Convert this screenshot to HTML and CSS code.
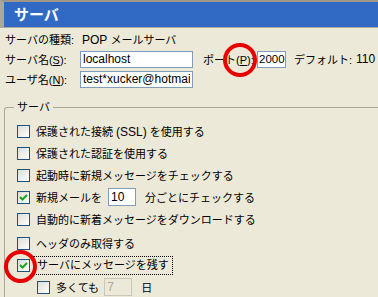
FILE: index.html
```html
<!DOCTYPE html>
<html>
<head lang="ja">
    <meta charset="UTF-8">
    <title>サーバ</title>
    <link rel="stylesheet" href="styles.css">
</head>
<body>
<div class="header">
    <h1 class="header-title">サーバ</h1>
</div>
<div class="info">
    <div class="info-row">
        <span class="info-label">サーバの種類:</span>
        <span class="info-value"><span class="latin">POP</span> メールサーバ</span>
    </div>
    <div class="info-row">
        <label class="info-label">サーバ名(<u>S</u>):</label>
        <input class="field field-host" type="text" value="localhost">
        <label class="port-label">ポート(<u>P</u>):</label>
        <input class="field field-port" type="text" value="2000">
        <span class="default-label">デフォルト:</span>
        <span class="latin">110</span>
    </div>
    <div class="info-row">
        <label class="info-label">ユーザ名(<u>N</u>):</label>
        <input class="field field-host" type="text" value="test*xucker@hotmail.com">
    </div>
</div>
<fieldset class="group">
    <legend class="group-title">サーバ</legend>
    <div class="opt">
        <span class="check"></span>
        <span class="opt-text">保護された接続 <span class="latin">(SSL)</span> を使用する</span>
    </div>
    <div class="opt">
        <span class="check"></span>
        <span class="opt-text">保護された認証を使用する</span>
    </div>
    <div class="opt">
        <span class="check"></span>
        <span class="opt-text">起動時に新規メッセージをチェックする</span>
    </div>
    <div class="opt">
        <span class="check checked">
            <svg width="11" height="11" viewBox="0 0 11 11"><path d="M2 5 L4.5 7.5 L9 3" fill="none" stroke="#21a121" stroke-width="2"/></svg>
        </span>
        <span class="opt-text">新規メールを</span>
        <input class="field field-small" type="text" value="10">
        <span class="opt-text opt-after">分ごとにチェックする</span>
    </div>
    <div class="opt">
        <span class="check"></span>
        <span class="opt-text">自動的に新着メッセージをダウンロードする</span>
    </div>
    <div class="opt opt-gap">
        <span class="check"></span>
        <span class="opt-text">ヘッダのみ取得する</span>
    </div>
    <div class="opt">
        <span class="check checked">
            <svg width="11" height="11" viewBox="0 0 11 11"><path d="M2 5 L4.5 7.5 L9 3" fill="none" stroke="#21a121" stroke-width="2"/></svg>
        </span>
        <span class="opt-text focus">サーバにメッセージを残す</span>
    </div>
    <div class="opt opt-sub">
        <span class="check"></span>
        <span class="opt-text">多くても</span>
        <input class="field field-small field-off" type="text" value="7" disabled>
        <span class="opt-text opt-day">日</span>
    </div>
</fieldset>
<span class="mark mark-port"></span>
<span class="mark mark-keep"></span>
</body>
</html>
```

FILE: styles.css
```css
* {
    margin: 0;
    padding: 0;
    box-sizing: border-box;
}

body {
    width: 378px;
    height: 297px;
    overflow: hidden;
    position: relative;
    background: #ece9d8;
    color: #000;
    font-family: "Liberation Sans", "Noto Sans CJK JP", sans-serif;
    font-size: 11px;
}

.latin {
    font-size: 12px;
}

.header {
    height: 28px;
    border-top: 2px solid #9d9689;
    border-left: 4px solid #aca899;
    border-bottom: 1px solid #aca899;
    background: #316ac5;
}

.header-title {
    padding-left: 10px;
    color: #fff;
    font-size: 15px;
    font-weight: bold;
    line-height: 25px;
}

.info {
    padding: 1px 0 0 5px;
}

.info-row {
    display: flex;
    align-items: center;
    height: 20px;
    white-space: nowrap;
}

.info-label {
    width: 75px;
    flex-shrink: 0;
}

.info-value {
    padding-left: 2px;
}

.field {
    height: 17px;
    border: 1px solid #7f9db9;
    background: #fff;
    font-family: "Liberation Sans", sans-serif;
    font-size: 12px;
    padding: 0 2px;
    color: #000;
}

.field-host {
    width: 113px;
}

.port-label {
    width: 54px;
    margin-left: 10px;
    flex-shrink: 0;
}

.field-port {
    width: 29px;
    padding: 0 0 0 1px;
    font-size: 11.5px;
}

.default-label {
    width: 62px;
    margin-left: 8px;
    flex-shrink: 0;
}

.group {
    margin: 10px 0 0 4px;
    height: 200px;
    border: 1px solid #aca899;
    border-right: none;
    border-bottom: none;
    border-radius: 3px 0 0 0;
    padding: 5px 0 0 12px;
}

.group-title {
    margin-left: -3px;
    padding: 0 3px;
    line-height: 16px;
}

.opt {
    display: flex;
    align-items: center;
    height: 22px;
    white-space: nowrap;
}

.opt-gap {
    margin-top: 2px;
}

.opt-sub {
    padding-left: 20px;
}

.check {
    width: 13px;
    height: 13px;
    flex-shrink: 0;
    border: 1px solid #1c5180;
    background: linear-gradient(135deg, #dcdcd7, #fff);
    display: flex;
    align-items: center;
    justify-content: center;
}

.opt-text {
    margin-left: 6px;
}

.field-small {
    width: 28px;
    height: 18px;
    margin-left: 6px;
}

.opt-after {
    margin-left: 9px;
}

.field-off {
    background: #ece9d8;
    color: #aca899;
    border-color: #c9c7ba;
    margin-left: 5px;
}

.opt-day {
    margin-left: 9px;
}

.focus {
    margin-left: 3px;
    padding: 1px 3px;
    border: 1px dotted #000;
    line-height: 15px;
}

.mark {
    position: absolute;
    border: 4px solid #e80000;
    border-radius: 50%;
}

.mark-port {
    left: 223px;
    top: 43px;
    width: 34px;
    height: 34px;
}

.mark-keep {
    left: 4px;
    top: 250px;
    width: 33px;
    height: 33px;
}
```
